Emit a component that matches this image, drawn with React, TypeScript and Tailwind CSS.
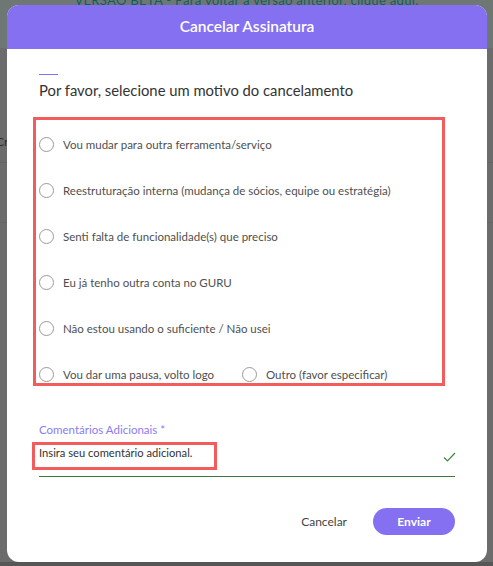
import React from "react";

const REASONS = [
  "Vou mudar para outra ferramenta/serviço",
  "Reestruturação interna (mudança de sócios, equipe ou estratégia)",
  "Senti falta de funcionalidade(s) que preciso",
  "Eu já tenho outra conta no GURU",
  "Não estou usando o suficiente / Não usei",
];

function Radio({ label }: { label: string }) {
  return (
    <label className="flex items-center h-[15px] gap-[9px] cursor-pointer">
      <span className="w-[15px] h-[15px] rounded-full border-[1.5px] border-[#9a9a9a] shrink-0" />
      <span className="text-[11.5px] text-[#4f4f4f] leading-none whitespace-nowrap">{label}</span>
    </label>
  );
}

export default function App() {
  return (
    <div
      className="relative w-[493px] h-[566px] overflow-hidden bg-[#6c6c6c]"
      style={{ fontFamily: "Lato, 'Noto Sans', sans-serif" }}
    >
      {/* page behind the overlay */}
      <div className="h-[48px] bg-[#6f7775] flex justify-center">
        <p className="-mt-[9px] text-[13px] text-[#0f5f60] tracking-wide">
          VERSÃO BETA - Para voltar a versão anterior, clique aqui.
        </p>
      </div>
      <div className="border-b border-[#646464] h-[115px] pt-[85px] text-[12px] text-[#2e2e2e] -ml-[4px]">
        Cr
      </div>
      <div className="border-b border-[#646464] h-[60px]" />
      <div className="absolute left-0 right-0 bottom-0 h-[4px] bg-[#565656]" />

      {/* modal */}
      <div className="absolute left-[7px] top-[5px] w-[480px] h-[557px] bg-white rounded-[12px] overflow-hidden flex flex-col">
        <div className="h-[44px] bg-[#8470f0] flex items-center justify-center">
          <h2 className="text-white text-[15.5px] font-semibold">Cancelar Assinatura</h2>
        </div>

        <div className="px-[26px]">
          <div className="ml-[6px] mt-[25px] w-[19px] h-[1px] bg-[#8470f0]" />
          <p className="ml-[6px] mt-[5px] text-[14.8px] text-[#333] leading-[20px]">
            Por favor, selecione um motivo do cancelamento
          </p>

          <div className="mt-[17px] w-[412px] border-[3px] border-[#f25c5c] pl-[3px] pt-[17px] pb-[1px] flex flex-col gap-[31px]">
            {REASONS.map((r) => (
              <Radio key={r} label={r} />
            ))}
            <div className="flex">
              <div className="w-[203px]">
                <Radio label="Vou dar uma pausa, volto logo" />
              </div>
              <Radio label="Outro (favor especificar)" />
            </div>
          </div>

          <div className="ml-[6px] mt-[38px] text-[11.5px] text-[#8b7cf0] leading-none">
            Comentários Adicionais *
          </div>
          <div className="mt-[6px] relative">
            <div className="w-[185px] h-[28px] -ml-[1px] border-[3px] border-[#f25c5c] pl-[4px] pt-[1px] text-[11.2px] text-[#333] leading-[14px]">
              Insira seu comentário adicional.
            </div>
            <svg
              className="absolute right-[5px] top-[10px]"
              width="13"
              height="10"
              viewBox="0 0 13 10"
              fill="none"
            >
              <path d="M1 5.5 L4.5 9 L12 1" stroke="#3f8a3f" strokeWidth="1.2" />
            </svg>
          </div>
          <div className="ml-[6px] mt-[6px] w-[416px] h-[1.5px] bg-[#3d7a3d]" />

          <div className="mt-[31px] flex justify-end items-center gap-[26px] pr-[6px]">
            <button className="text-[12px] text-[#444]">Cancelar</button>
            <button className="w-[82px] h-[27px] rounded-full bg-[#8470f0] text-white text-[12px] font-bold">
              Enviar
            </button>
          </div>
        </div>
      </div>
    </div>
  );
}
